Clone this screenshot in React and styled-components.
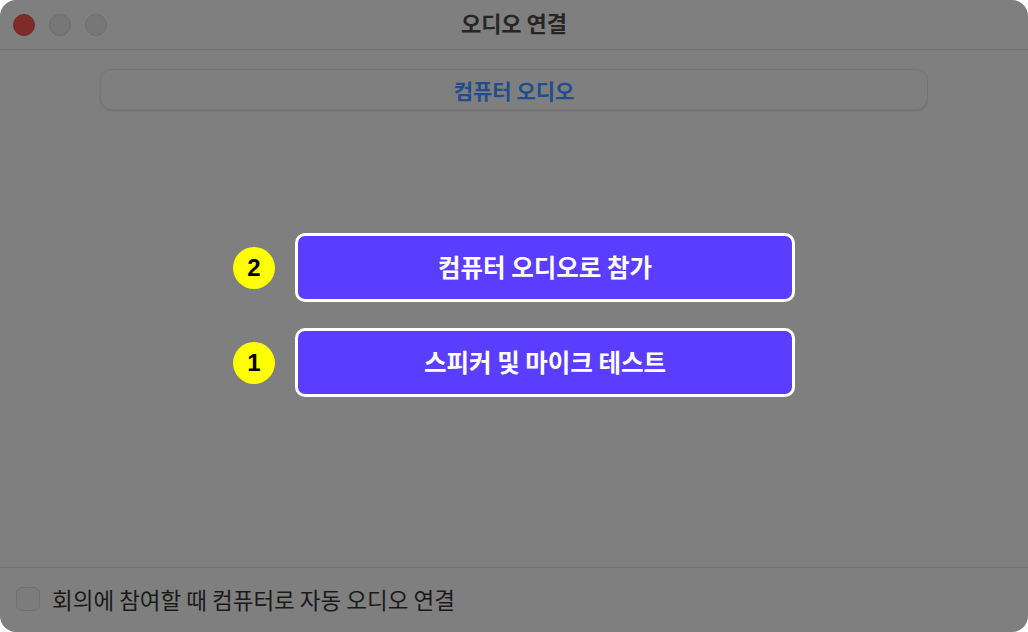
import React from "react";
import styled, { createGlobalStyle } from "styled-components";

const GlobalStyle = createGlobalStyle`
  html, body {
    margin: 0;
    padding: 0;
    background: #ffffff;
  }
  body {
    font-family: "Noto Sans CJK KR", "Noto Sans", sans-serif;
  }
`;

const Window = styled.div`
  width: 1028px;
  height: 632px;
  box-sizing: border-box;
  border-radius: 16px;
  background: #7f7f7f;
  overflow: hidden;
  display: flex;
  flex-direction: column;
`;

const TitleBar = styled.div`
  height: 50px;
  flex: none;
  display: flex;
  align-items: center;
  position: relative;
  border-bottom: 1px solid #727272;
  box-sizing: border-box;
`;

const Lights = styled.div`
  display: flex;
  gap: 14px;
  padding-left: 13px;
`;

const Light = styled.span`
  width: 22px;
  height: 22px;
  border-radius: 50%;
  box-sizing: border-box;
  background: ${(p) => (p.$close ? "#7e2b2b" : "#777777")};
  border: 1px solid ${(p) => (p.$close ? "#742828" : "#6e6e6e")};
`;

const Title = styled.div`
  position: absolute;
  left: 0;
  right: 0;
  top: 6px;
  text-align: center;
  font-size: 22px;
  line-height: 32px;
  font-weight: 700;
  color: #262626;
  pointer-events: none;
`;

const Content = styled.div`
  flex: 1;
  display: flex;
  flex-direction: column;
  align-items: center;
  padding: 19px 100px 0;
`;

const Tab = styled.div`
  width: 100%;
  height: 41px;
  box-sizing: border-box;
  border: 1px solid #747474;
  border-radius: 12px;
  box-shadow: 0 1px 2px rgba(0, 0, 0, 0.12);
  display: flex;
  align-items: center;
  justify-content: center;
  font-size: 21px;
  font-weight: 700;
  color: #1f4d8f;
`;

const Actions = styled.div`
  margin-top: 123px;
  display: flex;
  flex-direction: column;
  gap: 26px;
`;

const ActionRow = styled.div`
  display: flex;
  align-items: center;
  gap: 20px;
`;

const Badge = styled.span`
  width: 42px;
  height: 42px;
  border-radius: 50%;
  background: #ffff00;
  color: #000;
  font-family: "Liberation Sans", Arial, sans-serif;
  font-weight: 700;
  font-size: 24px;
  display: flex;
  align-items: center;
  justify-content: center;
`;

const ActionButton = styled.button`
  width: 500px;
  height: 69px;
  box-sizing: border-box;
  border: 3px solid #ffffff;
  border-radius: 10px;
  background: #5a3dfe;
  color: #ffffff;
  font-family: inherit;
  font-size: 24.5px;
  font-weight: 700;
  padding: 0 0 2px;
  cursor: pointer;
`;

const Footer = styled.div`
  height: 65px;
  flex: none;
  box-sizing: border-box;
  border-top: 1px solid #737373;
  display: flex;
  align-items: center;
  gap: 12px;
  padding: 0 0 2px 16px;
`;

const Checkbox = styled.span`
  width: 24px;
  height: 24px;
  box-sizing: border-box;
  border: 1px solid #6f6f6f;
  border-radius: 6px;
  background: #7c7c7c;
`;

const FooterLabel = styled.span`
  font-size: 22.5px;
  color: #1a1a1a;
`;

const actions = [
  { badge: "2", label: "컴퓨터 오디오로 참가" },
  { badge: "1", label: "스피커 및 마이크 테스트" },
];

export default function App() {
  return (
    <>
      <GlobalStyle />
      <Window>
        <TitleBar>
          <Lights>
            <Light $close />
            <Light />
            <Light />
          </Lights>
          <Title>오디오 연결</Title>
        </TitleBar>
        <Content>
          <Tab>컴퓨터 오디오</Tab>
          <Actions>
            {actions.map((a) => (
              <ActionRow key={a.badge}>
                <Badge>{a.badge}</Badge>
                <ActionButton>{a.label}</ActionButton>
              </ActionRow>
            ))}
          </Actions>
        </Content>
        <Footer>
          <Checkbox />
          <FooterLabel>회의에 참여할 때 컴퓨터로 자동 오디오 연결</FooterLabel>
        </Footer>
      </Window>
    </>
  );
}
